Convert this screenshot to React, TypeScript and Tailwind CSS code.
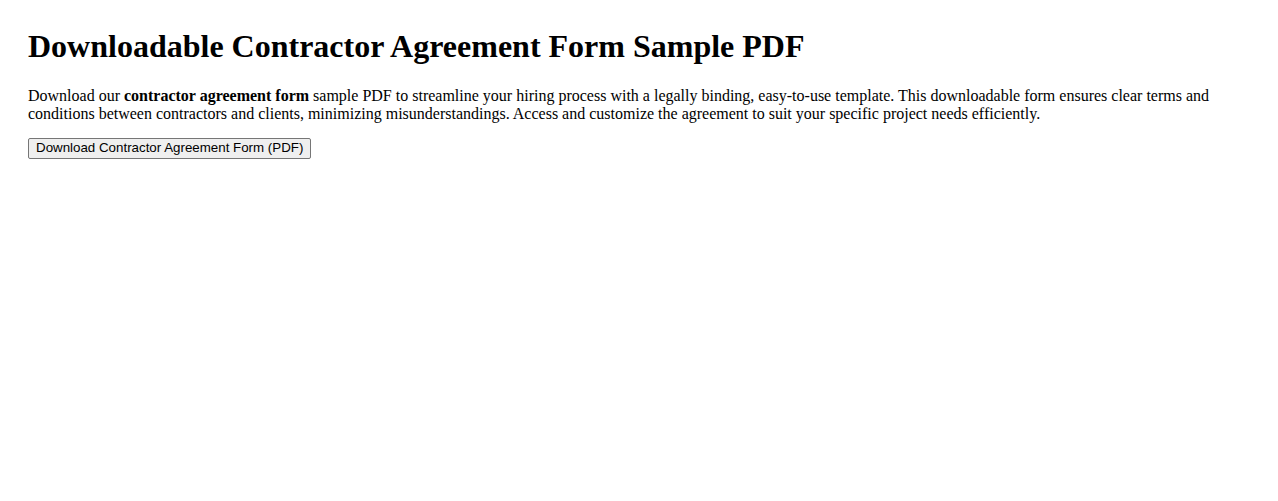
export default function App() {
  return (
    <div className="min-h-screen bg-white px-[28px] pt-[29px] pb-[28px] text-black font-['Liberation_Serif',_'Times_New_Roman',_serif]">
      <h1 className="mb-[23px] text-[32px] font-bold leading-[1.107]">
        Downloadable Contractor Agreement Form Sample PDF
      </h1>
      <p className="mb-[12px] text-base leading-[18px]">
        Download our <strong className="font-bold">contractor agreement form</strong> sample PDF to
        streamline your hiring process with a legally binding, easy-to-use template. This
        downloadable form ensures clear terms and conditions between contractors and clients,
        minimizing misunderstandings. Access and customize the agreement to suit your specific
        project needs efficiently.
      </p>
      <button className="h-[21px] rounded-[2px] border border-[#767676] bg-[#efefef] px-[7px] text-[13.333px] leading-none text-black font-['Liberation_Sans',_Arial,_sans-serif] hover:bg-[#e5e5e5]">
        Download Contractor Agreement Form (PDF)
      </button>
    </div>
  );
}
